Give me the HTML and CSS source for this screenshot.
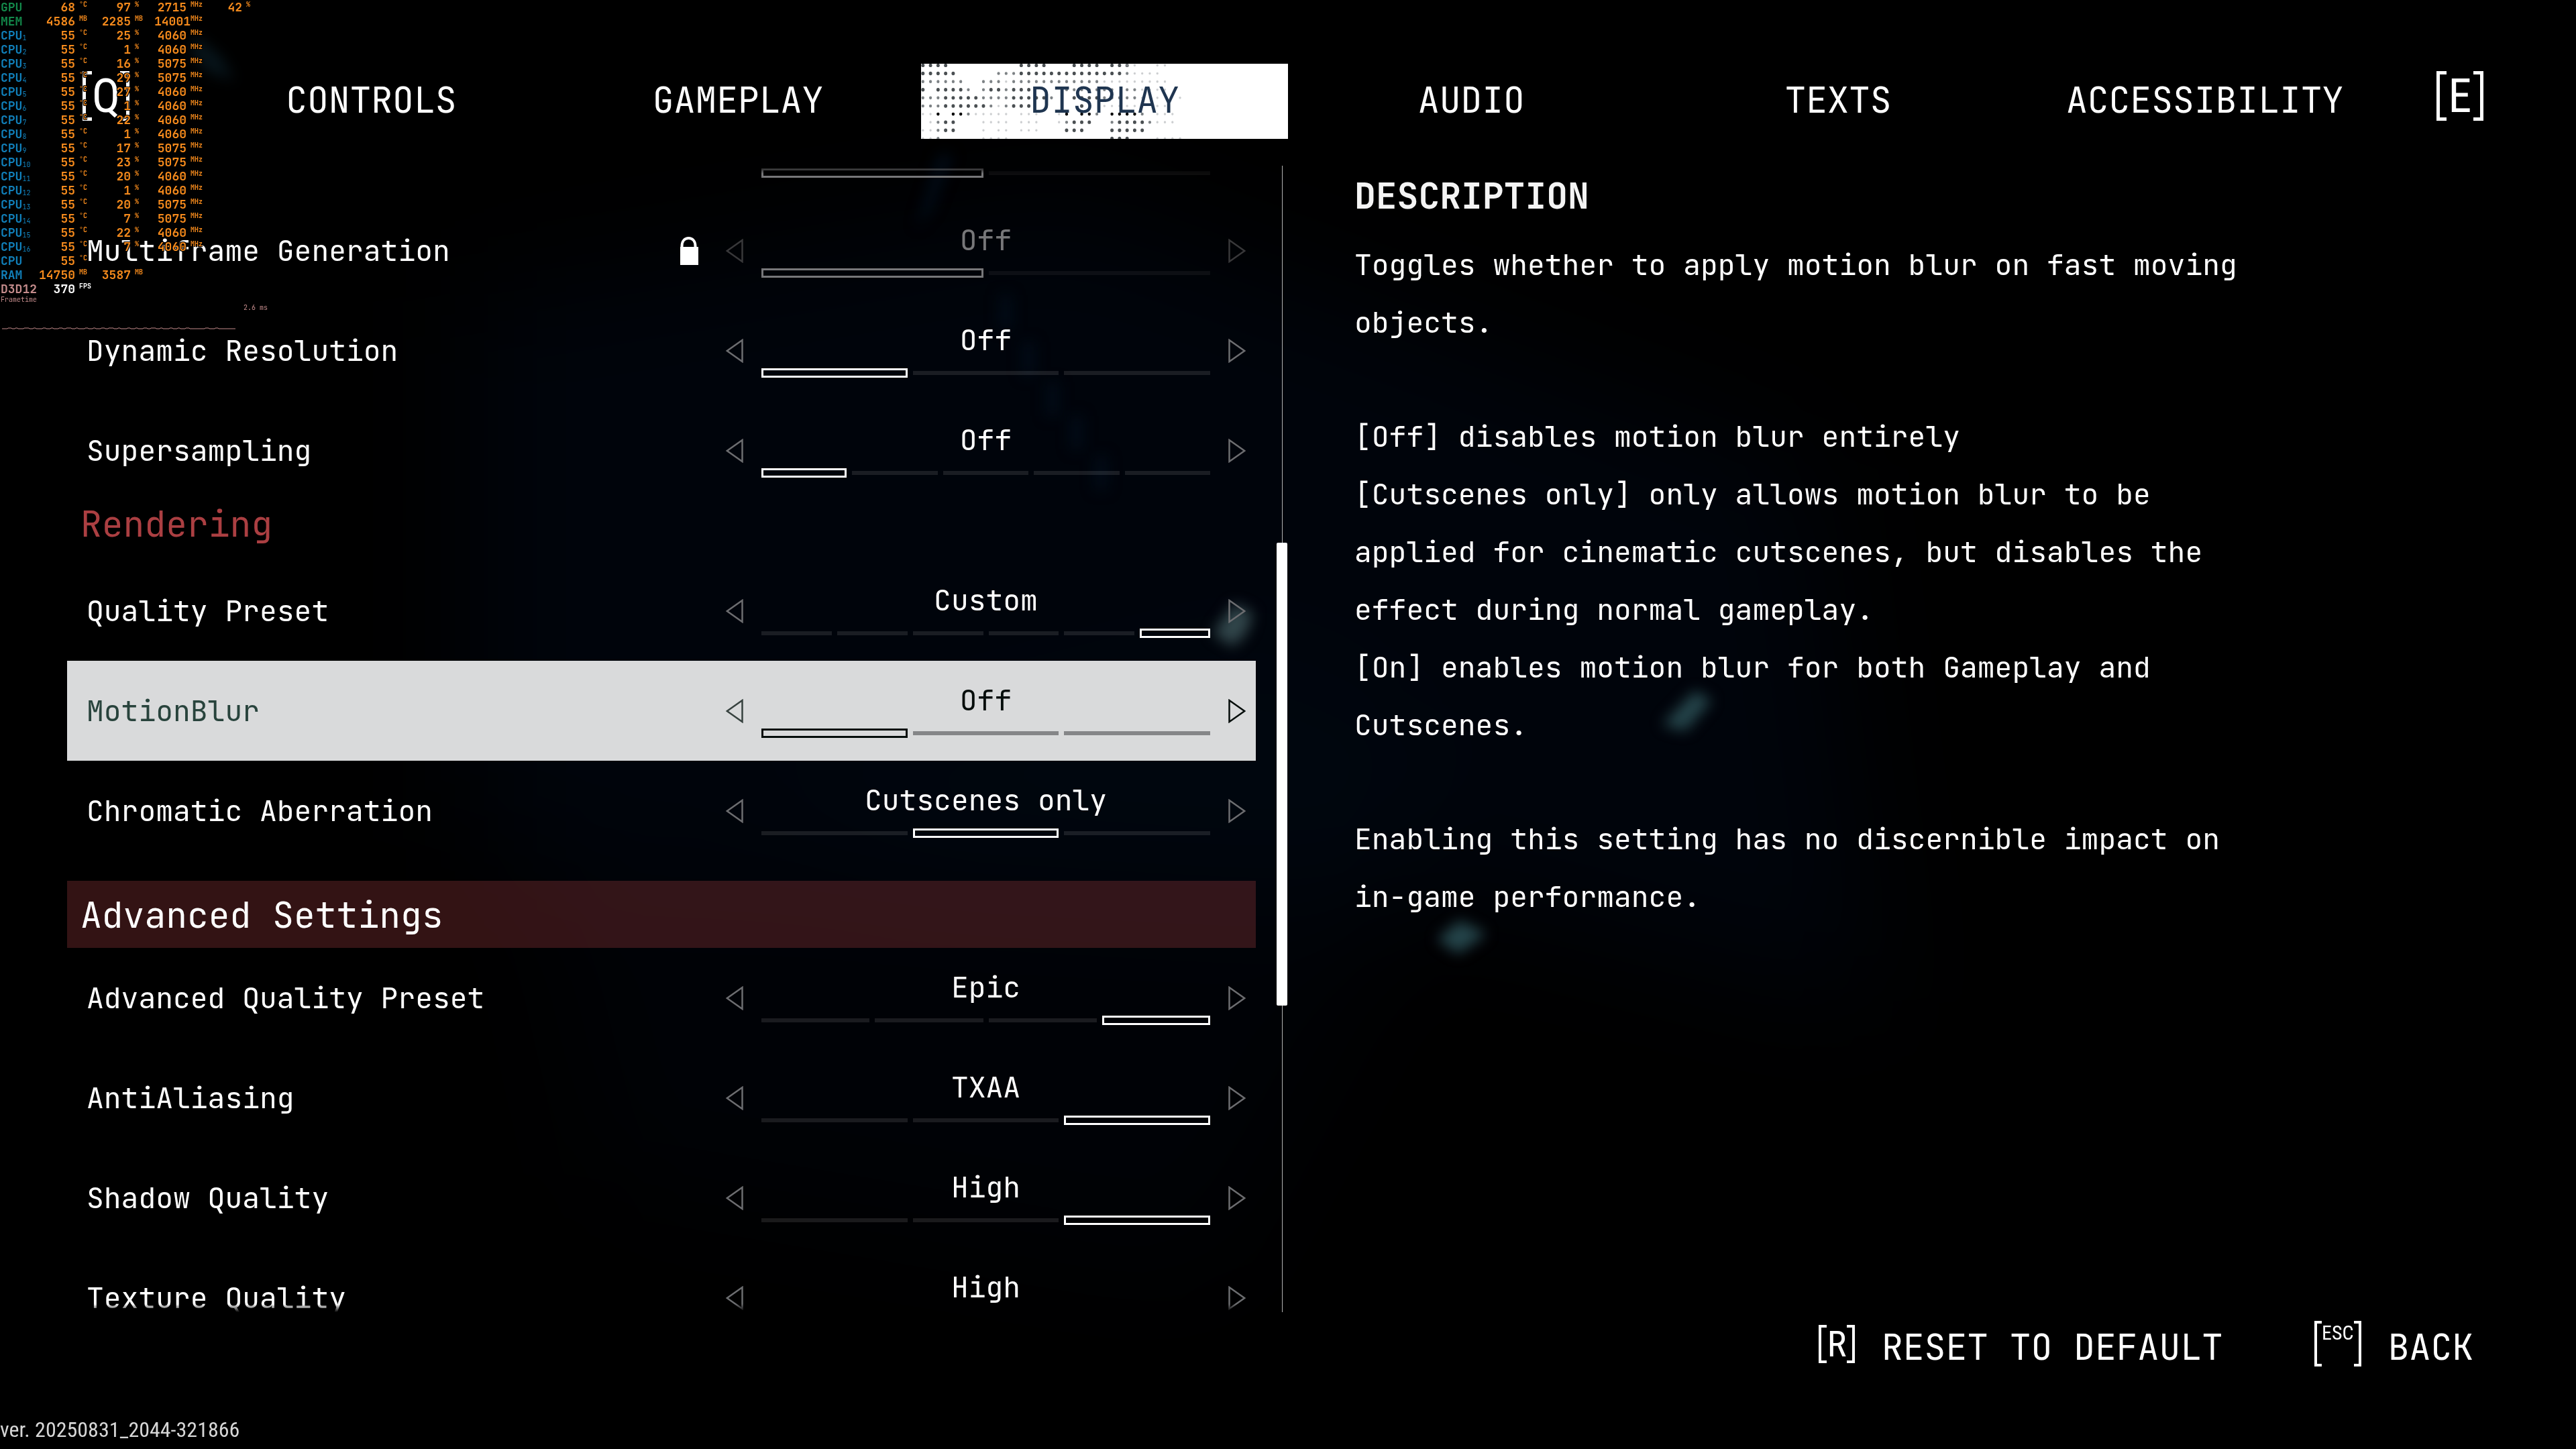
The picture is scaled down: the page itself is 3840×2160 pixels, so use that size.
FILE: index.html
```html
<!DOCTYPE html>
<html lang="en">
<head>
<meta charset="utf-8">
<title>Display settings</title>
<link rel="stylesheet" href="styles.css">
</head>
<body>
<svg class="symbols" aria-hidden="true">
  <symbol id="prev" viewBox="0 0 26 36"><path d="M24.500 2V34L1.800 18Z" fill="none" stroke="currentColor" stroke-width="2.500"/></symbol>
  <symbol id="next" viewBox="0 0 26 36"><path d="M1.500 2V34L24.200 18Z" fill="none" stroke="currentColor" stroke-width="2.500"/></symbol>
</svg>
<svg class="backdrop" viewBox="0 0 3840 2160" preserveAspectRatio="none" aria-hidden="true">
  <defs>
    <filter id="soft" x="-50%" y="-50%" width="200%" height="200%" color-interpolation-filters="sRGB"><feGaussianBlur stdDeviation="10"/></filter>
    <filter id="haze" x="-50%" y="-50%" width="200%" height="200%" color-interpolation-filters="sRGB"><feGaussianBlur stdDeviation="90"/></filter>
  </defs>
  <g filter="url(#haze)" fill="#00040b">
    <path d="M700 450L1600 300L2700 700L2800 1500L2000 1300L1500 1500L700 1250Z"/>
    <path d="M800 1300L2100 1350L1800 1900L900 1750Z" fill="#000206"/>
    <path d="M1100 1150L1900 950L2150 1100L2050 1350L1400 1300Z" fill="#00060e"/>
  </g>
  <g filter="url(#soft)">
    <path d="M1840 900L1868 914L1858 944L1838 964L1808 944Z" fill="#31464b"/>
    <path d="M2526 1030L2552 1044L2512 1090L2478 1080Z" fill="#24444a"/>
    <path d="M2176 1372L2216 1392L2174 1422L2142 1400Z" fill="#24444a"/>
    <path d="M290 52L330 84L350 120L310 108L284 80Z" fill="#07141a"/>
    <path d="M1400 230L1420 230L1390 310L1366 340Z" fill="#010c18"/>
    <path d="M1490 440h18v50h-18zM1524 510h18v50h-18zM1560 570h18v50h-18zM1596 620h18v50h-18zM1632 680h18v50h-18z" fill="#010c18"/>
  </g>
</svg>

<div class="page">
  <header class="topbar">
    <div class="topbar__key"><kbd class="key">Q</kbd></div>
    <nav class="tabs">
      <a class="tab" href="#controls">CONTROLS</a>
      <a class="tab" href="#gameplay">GAMEPLAY</a>
      <a class="tab tab--active" href="#display">
        <svg class="tab__dots" viewBox="0 0 48.500 9.250" preserveAspectRatio="none" aria-hidden="true">
          <g transform="translate(.25 .2)" fill="none" stroke-linecap="round" stroke-dasharray="0 1">
            <path stroke="#4a4f52" stroke-width=".44" d="M0 0h3.100M13 0h3.100M20 0h3.100M25 0h2.100M0 1h4.100M13 1h13.100M2 3h3.100M0 3h.1M9 3h1.100M12 3h2.100M20 4h3.100M3 4h4.100M12 4h4.100M3 5h5.100M12 5h2.100M21 5h.1M3 7h1.100M20 7h2.100M26 7h3.100M3 8h1.100M19 8h2.100M25 8h4.100M25 9h2.100"/>
            <path stroke="#7d8285" stroke-width=".38" d="M27 0h.1M10 1h2.100M27 1h.1M0 2h5.100M8 2h2.100M12 2h11.100M6 3h.1M8 3h.1M11 3h.1M19 3h6.100M27 3h1.100M0 4h2.100M8 4h3.100M17 4h.1M24 4h4.100M0 5h2.100M9 5h.1M11 5h.1M6 6h.1M23 6h.1M29 6h.1M2 7h.1M19 7h.1M25 7h.1M30 7h.1M2 8h.1M2 9h.1"/>
            <path stroke="#000" stroke-width=".4" d="M2 6h.1M4 6h1.100M19 6h.1M21 6h1.100M25 6h3.100"/>
            <path stroke="#cdcfd1" stroke-width=".3" d="M28 0h.1M31 0h1.100M28 1h3.100M11 2h.1M24 2h8.100M29 3h3.100M29 4h2.100M34 4h.1M10 5h.1M24 5h4.100M31 5h1.100M0 6h1.100M7 6h4.100M13 6h2.100M18 6h.1M31 6h2.100M1 7h.1M8 7h3.100M13 7h2.100M18 7h.1M31 7h2.100M0 8h1.100M8 8h.1M10 8h1.100M13 8h2.100M0 9h1.100M8 9h3.100M31 9h3.100"/>
          </g>
        </svg>
        <span class="tab__text">DISPLAY</span>
      </a>
      <a class="tab" href="#audio">AUDIO</a>
      <a class="tab" href="#texts">TEXTS</a>
      <a class="tab" href="#accessibility">ACCESSIBILITY</a>
    </nav>
    <div class="topbar__key"><kbd class="key">E</kbd></div>
  </header>

  <main class="content">
    <section class="list">
      <div class="setting setting--cut setting--locked">
        <div class="bar"><span class="seg seg--on"></span><span class="seg"></span></div>
      </div>
      <div class="setting setting--locked">
        <span class="setting__label">Multiframe Generation</span>
        <svg class="lock" viewBox="0 0 27 42" aria-hidden="true"><path d="M2.500 16V14C2.500 6 7 2 12.500 2S22.500 6 22.500 14V16" fill="none" stroke="#fff" stroke-width="4"/><path d="M0 15H27V42H0Z" fill="#fff"/></svg>
        <button class="arrow" aria-label="Previous"><svg><use href="#prev"/></svg></button>
        <div class="choice"><output class="choice__value">Off</output><div class="bar"><span class="seg seg--on"></span><span class="seg"></span></div></div>
        <button class="arrow" aria-label="Next"><svg><use href="#next"/></svg></button>
      </div>
      <div class="setting">
        <span class="setting__label">Dynamic Resolution</span>
        <button class="arrow" aria-label="Previous"><svg><use href="#prev"/></svg></button>
        <div class="choice"><output class="choice__value">Off</output><div class="bar"><span class="seg seg--on"></span><span class="seg"></span><span class="seg"></span></div></div>
        <button class="arrow" aria-label="Next"><svg><use href="#next"/></svg></button>
      </div>
      <div class="setting">
        <span class="setting__label">Supersampling</span>
        <button class="arrow" aria-label="Previous"><svg><use href="#prev"/></svg></button>
        <div class="choice"><output class="choice__value">Off</output><div class="bar"><span class="seg seg--on"></span><span class="seg"></span><span class="seg"></span><span class="seg"></span><span class="seg"></span></div></div>
        <button class="arrow" aria-label="Next"><svg><use href="#next"/></svg></button>
      </div>
      <h3 class="group">Rendering</h3>
      <div class="setting">
        <span class="setting__label">Quality Preset</span>
        <button class="arrow" aria-label="Previous"><svg><use href="#prev"/></svg></button>
        <div class="choice"><output class="choice__value">Custom</output><div class="bar"><span class="seg"></span><span class="seg"></span><span class="seg"></span><span class="seg"></span><span class="seg"></span><span class="seg seg--on"></span></div></div>
        <button class="arrow" aria-label="Next"><svg><use href="#next"/></svg></button>
      </div>
      <div class="setting setting--selected">
        <span class="setting__label">MotionBlur</span>
        <button class="arrow" aria-label="Previous"><svg><use href="#prev"/></svg></button>
        <div class="choice"><output class="choice__value">Off</output><div class="bar"><span class="seg seg--on"></span><span class="seg"></span><span class="seg"></span></div></div>
        <button class="arrow arrow--hot" aria-label="Next"><svg><use href="#next"/></svg></button>
      </div>
      <div class="setting">
        <span class="setting__label">Chromatic Aberration</span>
        <button class="arrow" aria-label="Previous"><svg><use href="#prev"/></svg></button>
        <div class="choice"><output class="choice__value">Cutscenes only</output><div class="bar"><span class="seg"></span><span class="seg seg--on"></span><span class="seg"></span></div></div>
        <button class="arrow" aria-label="Next"><svg><use href="#next"/></svg></button>
      </div>
      <h2 class="banner">Advanced Settings</h2>
      <div class="setting">
        <span class="setting__label">Advanced Quality Preset</span>
        <button class="arrow" aria-label="Previous"><svg><use href="#prev"/></svg></button>
        <div class="choice"><output class="choice__value">Epic</output><div class="bar"><span class="seg"></span><span class="seg"></span><span class="seg"></span><span class="seg seg--on"></span></div></div>
        <button class="arrow" aria-label="Next"><svg><use href="#next"/></svg></button>
      </div>
      <div class="setting">
        <span class="setting__label">AntiAliasing</span>
        <button class="arrow" aria-label="Previous"><svg><use href="#prev"/></svg></button>
        <div class="choice"><output class="choice__value">TXAA</output><div class="bar"><span class="seg"></span><span class="seg"></span><span class="seg seg--on"></span></div></div>
        <button class="arrow" aria-label="Next"><svg><use href="#next"/></svg></button>
      </div>
      <div class="setting">
        <span class="setting__label">Shadow Quality</span>
        <button class="arrow" aria-label="Previous"><svg><use href="#prev"/></svg></button>
        <div class="choice"><output class="choice__value">High</output><div class="bar"><span class="seg"></span><span class="seg"></span><span class="seg seg--on"></span></div></div>
        <button class="arrow" aria-label="Next"><svg><use href="#next"/></svg></button>
      </div>
      <div class="setting">
        <span class="setting__label">Texture Quality</span>
        <button class="arrow" aria-label="Previous"><svg><use href="#prev"/></svg></button>
        <div class="choice"><output class="choice__value">High</output></div>
        <button class="arrow" aria-label="Next"><svg><use href="#next"/></svg></button>
      </div>
    </section>

    <div class="scroll" aria-hidden="true">
      <span class="scroll__before"></span>
      <span class="scroll__thumb"></span>
      <span class="scroll__after"></span>
    </div>

    <aside class="info">
      <h2 class="info__title">DESCRIPTION</h2>
      <div class="info__text">
        <p>Toggles whether to apply motion blur on fast moving objects.</p>
        <p>[Off] disables motion blur entirely<br>[Cutscenes only] only allows motion blur to be applied for cinematic cutscenes, but disables the effect during normal gameplay.<br>[On] enables motion blur for both Gameplay and Cutscenes.</p>
        <p>Enabling this setting has no discernible impact on in-game performance.</p>
      </div>
    </aside>
  </main>

  <footer class="bottom">
    <div class="actions">
      <button class="action"><kbd class="key key--small">R</kbd><span class="action__text">RESET TO DEFAULT</span></button>
      <button class="action"><kbd class="key key--esc">ESC</kbd><span class="action__text">BACK</span></button>
    </div>
    <div class="version">ver. 20250831_2044-321866</div>
  </footer>
</div>

<div class="monitor">
  <table class="stats">
    <colgroup><col class="c-name"><col class="c-first"><col class="c-unit"><col class="c-val"><col class="c-unit"><col class="c-val"><col class="c-unit"><col class="c-val"><col class="c-unit"></colgroup>
    <tr><th class="gpu">GPU</th><td>68</td><td>°C</td><td>97</td><td>%</td><td>2715</td><td>MHz</td><td>42</td><td>%</td></tr>
    <tr><th class="gpu">MEM</th><td>4586</td><td>MB</td><td>2285</td><td>MB</td><td>14001</td><td>MHz</td></tr>
    <tr><th>CPU<sub>1</sub></th><td>55</td><td>°C</td><td>25</td><td>%</td><td>4060</td><td>MHz</td></tr>
    <tr><th>CPU<sub>2</sub></th><td>55</td><td>°C</td><td>1</td><td>%</td><td>4060</td><td>MHz</td></tr>
    <tr><th>CPU<sub>3</sub></th><td>55</td><td>°C</td><td>16</td><td>%</td><td>5075</td><td>MHz</td></tr>
    <tr><th>CPU<sub>4</sub></th><td>55</td><td>°C</td><td>29</td><td>%</td><td>5075</td><td>MHz</td></tr>
    <tr><th>CPU<sub>5</sub></th><td>55</td><td>°C</td><td>27</td><td>%</td><td>4060</td><td>MHz</td></tr>
    <tr><th>CPU<sub>6</sub></th><td>55</td><td>°C</td><td>1</td><td>%</td><td>4060</td><td>MHz</td></tr>
    <tr><th>CPU<sub>7</sub></th><td>55</td><td>°C</td><td>22</td><td>%</td><td>4060</td><td>MHz</td></tr>
    <tr><th>CPU<sub>8</sub></th><td>55</td><td>°C</td><td>1</td><td>%</td><td>4060</td><td>MHz</td></tr>
    <tr><th>CPU<sub>9</sub></th><td>55</td><td>°C</td><td>17</td><td>%</td><td>5075</td><td>MHz</td></tr>
    <tr><th>CPU<sub>10</sub></th><td>55</td><td>°C</td><td>23</td><td>%</td><td>5075</td><td>MHz</td></tr>
    <tr><th>CPU<sub>11</sub></th><td>55</td><td>°C</td><td>20</td><td>%</td><td>4060</td><td>MHz</td></tr>
    <tr><th>CPU<sub>12</sub></th><td>55</td><td>°C</td><td>1</td><td>%</td><td>4060</td><td>MHz</td></tr>
    <tr><th>CPU<sub>13</sub></th><td>55</td><td>°C</td><td>20</td><td>%</td><td>5075</td><td>MHz</td></tr>
    <tr><th>CPU<sub>14</sub></th><td>55</td><td>°C</td><td>7</td><td>%</td><td>5075</td><td>MHz</td></tr>
    <tr><th>CPU<sub>15</sub></th><td>55</td><td>°C</td><td>22</td><td>%</td><td>4060</td><td>MHz</td></tr>
    <tr><th>CPU<sub>16</sub></th><td>55</td><td>°C</td><td>7</td><td>%</td><td>4060</td><td>MHz</td></tr>
    <tr><th>CPU</th><td>55</td><td>°C</td></tr>
    <tr><th>RAM</th><td>14750</td><td>MB</td><td>3587</td><td>MB</td></tr>
    <tr class="fps"><th class="api">D3D12</th><td>370</td><td>FPS</td></tr>
  </table>
  <div class="frametime">Frametime</div>
  <div class="frametime frametime--value">2.6 ms</div>
  <svg class="graph" viewBox="0 0 348 4" aria-hidden="true"><path d="M0 2h8l1-1h5l1 1h4l1-1h3l1 1h8l1-1h7l1 1h5l1-1h3l1 1h9l1-1h4l1 1h6l1-1h3l1 1h7l1-1h5l1 1h4l1-1h7l1 1h5l1-1h3l1 1h9l1-1h4l1 1h6l1-1h3l1 1h7l1-1h5l1 1h4l1-1h7l1 1h5l1-1h3l1 1h9l1-1h4l1 1h6l1-1h3l1 1h7l1-1h5l1 1h4l1-1h7l1 1h5l1-1h3l1 1h9l1-1h4l1 1h6l1-1h3l1 1h7l1-1h5l1 1h22l1-1h5l1 1h8l1-1h4l1 1H348" fill="none" stroke="#c58c8c" stroke-width="1"/></svg>
</div>
</body>
</html>
```

FILE: styles.css
```css
* { box-sizing: border-box; }

body {
  margin: 0;
  background: #000;
  color: #fff;
  font-family: "JetBrains Mono", "DejaVu Sans Mono", monospace;
  font-size: 43px;
}

button { border: 0; padding: 0; background: none; color: inherit; font: inherit; }
h2, h3, p { margin: 0; font-weight: 400; }
a { color: inherit; text-decoration: none; }

.symbols { display: none; }
.backdrop { position: fixed; inset: 0; width: 100%; height: 100%; z-index: -1; }

.page { height: 100vh; display: flex; flex-direction: column; }

/* Top bar */
.topbar { display: flex; height: 247px; padding-top: 95px; }
.topbar__key { width: 280px; height: 96px; display: flex; align-items: center; }
.topbar__key:first-child { padding-left: 123px; }
.topbar__key:last-child { padding-left: 72px; }
.tabs { flex: 1; display: grid; grid-template-columns: repeat(6, 1fr); height: 112px; font-size: 53px; }
.tab { position: relative; display: flex; align-items: center; justify-content: center; padding-bottom: 4px; }
.tab--active { background: #fff; color: #1f3550; }
.tab__dots { position: absolute; inset: 0; width: 100%; height: 100%; }
.tab__text { position: relative; }

/* Bracketed key hints */
.key {
  display: flex; align-items: center; justify-content: space-between;
  width: 70px; height: 74px;
  font-family: "Roboto Condensed", "Liberation Sans Narrow", Roboto, sans-serif;
  font-size: 70px; line-height: 74px;
}
.key::before, .key::after { content: ""; align-self: stretch; width: 10px; border: 5px solid #fff; }
.key::before { border-right: 0; }
.key::after { border-left: 0; }
.key--small { width: 54px; height: 57px; font-size: 54px; line-height: 57px; }
.key--esc { width: 70px; height: 68px; font-size: 30px; line-height: 36px; align-items: flex-start; }
.key--small::before, .key--small::after, .key--esc::before, .key--esc::after { width: 8px; border-width: 4px; }
.key--small::before, .key--esc::before { border-right: 0; }
.key--small::after, .key--esc::after { border-left: 0; }

/* Main area */
.content {
  flex: 1; min-height: 0;
  display: grid;
  grid-template-columns: minmax(0, 1772fr) 31px 16px 100px minmax(0, 1721fr);
  padding: 0 100px;
}
.list {
  overflow: hidden;
  -webkit-mask-image: linear-gradient(transparent, #000 12px, #000 calc(100% - 12px), transparent);
  mask-image: linear-gradient(transparent, #000 12px, #000 calc(100% - 12px), transparent);
}
.setting { display: flex; align-items: center; gap: 27px; height: 149px; padding: 0 15px 0 29px; --line: #fff; --dim: rgba(255, 255, 255, .1); --arrow: #6c6d70; }
.setting__label { flex: 1; white-space: nowrap; }
.lock { width: 27px; height: 42px; margin-right: 14px; }
.arrow { width: 26px; height: 36px; color: var(--arrow); }
.arrow svg { display: block; width: 26px; height: 36px; overflow: visible; }
.choice { flex: 0 1 669px; min-width: 0; height: 80px; display: flex; flex-direction: column; gap: 18px; }
.choice__value { line-height: 48px; text-align: center; white-space: nowrap; }
.bar { display: grid; grid-auto-flow: column; grid-auto-columns: minmax(0, 1fr); align-items: center; gap: 8px; height: 14px; }
.seg { height: 6px; background: var(--dim); }
.seg--on { height: 14px; background: none; border: 3px solid var(--line); }

.setting--locked { --line: #777779; --dim: rgba(255, 255, 255, .05); --arrow: #38383a; }
.setting--locked .choice__value { color: #777779; }
.setting--cut { height: 52px; align-items: flex-start; justify-content: flex-end; padding: 4px 68px 0 0; }
.setting--cut .bar { width: 669px; }

.setting--selected { background: #d9dadb; color: #050d0b; --line: #050d0b; --dim: #858688; --arrow: #37423f; }
.setting--selected .setting__label { color: #28433c; }
.arrow--hot { color: #050d0b; }

.group { height: 90px; padding-left: 20px; font-size: 53px; line-height: 70px; color: #ab3f42; }
.banner { height: 100px; margin-top: 30px; padding-left: 20px; font-size: 53px; line-height: 102px; background: rgba(170, 62, 66, .3); }

.scroll { grid-column: 3; display: flex; flex-direction: column; align-items: center; }
.scroll__before, .scroll__after { width: 1px; background: #b4b4b4; }
.scroll__before { flex: 562; }
.scroll__thumb { flex: 690; width: 16px; border-radius: 2px; background: #fff; }
.scroll__after { flex: 457; }

.info { grid-column: 5; padding-top: 10px; }
.info__title { font-size: 53px; line-height: 70px; font-weight: 700; color: #f4f4f4; }
.info__text { display: flex; flex-direction: column; gap: 84px; max-width: 1360px; margin-top: 25px; line-height: 86px; }

/* Footer */
.bottom { height: 204px; display: flex; flex-direction: column; justify-content: space-between; }
.actions { display: flex; justify-content: flex-end; gap: 136px; padding: 13px 153px 0 0; }
.action { display: flex; align-items: center; gap: 40px; height: 68px; font-size: 53px; }
.action__text { padding-top: 10px; line-height: 58px; }
.version {
  height: 48px; line-height: 38px; color: #d6d6d6;
  font-family: "Roboto Condensed", "Liberation Sans Narrow", Roboto, sans-serif; font-size: 32px;
}

/* Hardware monitor overlay */
.monitor { position: absolute; top: 0; left: 0; width: 402px; color: #f58a1c; font-size: 18px; font-weight: 700; text-shadow: 1px 1px #000, -1px -1px #000, 1px -1px #000, -1px 1px #000; }
.stats { table-layout: fixed; width: 396px; border-collapse: collapse; line-height: 21px; }
.stats tr { height: 21px; }
.stats th, .stats td { padding: 0; white-space: nowrap; text-align: right; vertical-align: top; }
.stats th { text-align: left; padding-left: 1px; color: #1180bb; }
.stats .gpu { color: #138a4b; }
.stats .api { color: #c58c8c; }
.stats .fps { color: #fff; }
.stats sub { font-size: 10px; line-height: 0; vertical-align: -1px; font-weight: 400; }
.stats td:nth-child(odd) { padding-left: 6px; text-align: left; font-size: 10px; line-height: 14px; }
.c-name { width: 57px; }
.c-first { width: 55px; }
.c-unit { width: 35px; }
.c-val { width: 48px; }
.frametime { padding-left: 1px; font-size: 10px; line-height: 12px; font-weight: 400; color: #c58c8c; }
.frametime--value { padding-right: 3px; text-align: right; }
.graph { display: block; width: 348px; height: 4px; margin: 23px 0 0 3px; }
```
